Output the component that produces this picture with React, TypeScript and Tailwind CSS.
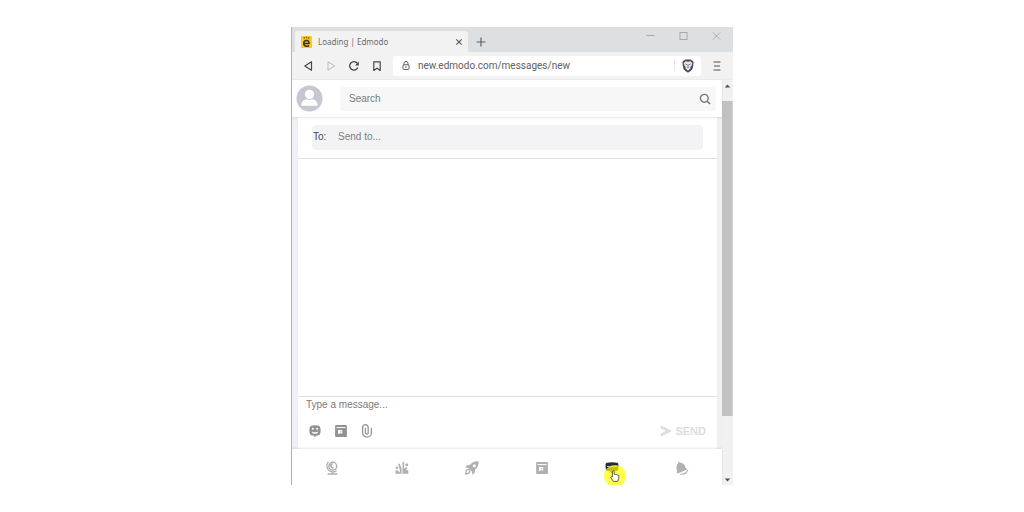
import React from 'react';

interface IconProps {
  className?: string;
}

const EdmodoLogo = ({ className }: IconProps) => (
  <svg viewBox="0 0 11 12" className={className} aria-hidden="true">
    <rect width="11" height="12" rx="0.6" fill="#fdc92f" />
    <path d="M3.2 7.6h4.9c.1-2-.9-3-2.5-3-1.700 0-2.900 1.200-2.900 3 0 1.700 1.200 2.700 3 2.700.9 0 1.700-.2 2.300-.7" fill="none" stroke="#3c3320" strokeWidth="1.5" />
    <circle cx="3.200" cy="1.900" r="0.8" fill="#7d6423" />
    <circle cx="5.500" cy="1.400" r="0.800" fill="#7d6423" />
    <circle cx="7.800" cy="1.900" r="0.800" fill="#7d6423" />
    <path d="M3.400 3.100h4.200" stroke="#b8942b" strokeWidth="0.700" />
  </svg>
);

const BraveIcon = ({ className }: IconProps) => (
  <svg viewBox="0 0 12 14" className={className} aria-hidden="true">
    <path d="M3 .5h6l1 1.200h1l.6 2-.7 4.800c-.3 1.500-1.200 2.500-2.300 3.400L6 13.700l-2.600-1.800C2.300 11 1.400 10 1.100 8.500L.4 3.700l.6-2h1z" fill="#4a4a5a" />
    <path d="M3.500 2.300L6 2.800l2.500-.5 1.800 2-.6 2.300L8.300 8.300l.2 1L6 11.700 3.500 9.300l.2-1-1.400-1.700-.6-2.300z" fill="#e9e9ee" />
    <path d="M3.300 5l1.900.7M8.700 5l-1.900.7M6 5.500v2M4.900 8.500L6 8l1.100.5" stroke="#5a5a6a" strokeWidth="0.800" fill="none" />
  </svg>
);

const SmileyIcon = ({ className }: IconProps) => (
  <svg viewBox="0 0 12 13" className={className} aria-hidden="true">
    <path d="M3 .4Q6-.1 9 .4q2.200.4 2.400 2.600.4 2.500 0 5-.3 2.100-2.400 2.400l-1.500.200L6 12.300l-1.500-1.700L3 10.400Q.900 10.100.600 8 .200 5.500.600 3 .800.800 3 .400z" fill="#929292" />
    <circle cx="3.800" cy="3.800" r="1" fill="#fff" />
    <circle cx="8.200" cy="3.800" r="1" fill="#fff" />
    <path d="M2.800 6.200c1 1.500 5.400 1.500 6.400 0-.1 1.800-1.600 2.600-3.200 2.600S2.900 8 2.800 6.200z" fill="#fff" />
  </svg>
);

const LibraryIcon = ({ className }: IconProps) => (
  <svg viewBox="0 0 12 12" className={className} aria-hidden="true">
    <rect x="0.100" y="0.100" width="11.800" height="11.800" rx="0.900" fill="currentColor" />
    <path d="M1.500 2.600h9" stroke="#fff" strokeWidth="1" />
    <path d="M3 5h4.200v4L5.500 7.900 3 9.200z" fill="#fff" />
    <path d="M5.200 6.300h1v1h-1z" fill="currentColor" />
  </svg>
);

const ClipIcon = ({ className }: IconProps) => (
  <svg viewBox="0 0 12 14" className={className} aria-hidden="true">
    <path d="M4.400 4.500v4.300a1.400 1.400 0 002.800 0V3.500a2.800 2.800 0 00-5.600 0v5.200a4.400 4.400 0 008.800 0V4.500" fill="none" stroke="#939393" strokeWidth="1.300" strokeLinecap="round" />
  </svg>
);

const SendIcon = ({ className }: IconProps) => (
  <svg viewBox="0 0 12 12" className={className} aria-hidden="true">
    <path d="M.700.300L11.900 6 .700 11.700V8.400L5.800 6 .700 3.600z" fill="currentColor" />
  </svg>
);

const GlobeIcon = ({ className }: IconProps) => (
  <svg viewBox="0 0 14 14" className={className} aria-hidden="true">
    <circle cx="7.800" cy="5.200" r="3.900" fill="none" stroke="currentColor" strokeWidth="1.500" />
    <path d="M5.200 3l2.200-1 .5 1.500-1.300 1 .6 1.200 1.600.7-.6 1.400-1.900-.8-1.400-1.700z" fill="currentColor" />
    <path d="M3.500.700A6.200 6.200 0 007.900 11a6 6 0 003.700-1.200M7.500 10.800v2M2.600 13h9.800" fill="none" stroke="currentColor" strokeWidth="1.300" />
  </svg>
);

const ClassesIcon = ({ className }: IconProps) => (
  <svg viewBox="0 0 14 13" className={className} aria-hidden="true">
    <circle cx="2" cy="6.300" r="1.300" fill="currentColor" />
    <circle cx="11.700" cy="3.300" r="1.500" fill="currentColor" />
    <path d="M.400 12.300V10c0-1.600 2.300-1.700 3.200-.2l1.200 1.100V8L3 2.600l1.500-.7 2.100 4.800v5.600zM7.500.600h1.600v6.700l2.200-1.900 1.300 1-1.800 2.100 2.500.2v3.600H7.500z" fill="currentColor" />
  </svg>
);

const RocketIcon = ({ className }: IconProps) => (
  <svg viewBox="0 0 14 14" className={className} aria-hidden="true">
    <path fillRule="evenodd" d="M13.700.300C10 .100 7 1.200 5.100 3.700L2 4.300.300 6.600l3 .300 3.800 3.800.2 3 2.300-1.800.500-3.300C12.600 6.800 13.900 4 13.700.300zM9.300 3.200a1.500 1.500 0 110 3 1.500 1.500 0 010-3z" fill="currentColor" />
    <path d="M.900 13.100l.4-3.500c.5-1.700 3.200-1.500 3.500.200.100 1.700-1.800 3-3.900 3.300z" fill="none" stroke="currentColor" strokeWidth="1.400" />
  </svg>
);

const MessagesIcon = ({ className }: IconProps) => (
  <svg viewBox="0 0 14 12" className={className} aria-hidden="true">
    <path d="M2 .700Q7-.400 12 .700q1.300.3 1.400 1.600.200 3-.3 5.500-.3 1-1.500 1.200l-2.300.2L7 11.500 5 9.200 2.500 9Q1.200 8.800.900 7.800.300 5 .600 2.300.700 1 2 .700z" fill="#25283b" />
    <path d="M2 4.700q1-1 2 0t2 0 2 0 2 0 2 0" stroke="#c5c6d3" strokeWidth="1" fill="none" />
  </svg>
);

const BellIcon = ({ className }: IconProps) => (
  <svg viewBox="0 0 13 14" className={className} aria-hidden="true">
    <path d="M3 .300l1.200 1.100C7.500 1.500 9.700 3.800 10.400 7.300l1.700.900L1.500 12.800 1.600 10.500C.500 7 .900 4 2.600 2.200z" fill="currentColor" />
    <path d="M4.800 13.100c3.400.400 6.500-1.300 7.600-4.100" fill="none" stroke="currentColor" strokeWidth="1.100" />
  </svg>
);

const HandCursor = ({ className }: IconProps) => (
  <svg viewBox="0 0 10 12" className={className} aria-hidden="true">
    <path d="M2.400 7V1.500q.9-1.200 1.800 0v2.800q1.200-.5 1.500.3 1.100-.5 1.500.4 1.400-.3 1.600.9v2.300L7.700 11.400H3.500L.900 8Q.600 6.700 1.600 6.500z" fill="#fff" stroke="#4d4d3a" strokeWidth="0.900" strokeLinejoin="round" />
  </svg>
);

const navItems = [
  { label: 'Stream', icon: GlobeIcon, size: 'size-[14px]', active: false },
  { label: 'Classes', icon: ClassesIcon, size: 'size-[14px]', active: false },
  { label: 'Discover', icon: RocketIcon, size: 'size-[14px]', active: false },
  { label: 'Library', icon: LibraryIcon, size: 'size-3', active: false },
  { label: 'Messages', icon: MessagesIcon, size: 'size-[14px]', active: true },
  { label: 'Notifications', icon: BellIcon, size: 'size-[14px]', active: false },
];

const TitleBar = () => (
  <div className="flex h-[25px] items-end bg-[#dce0e3] pl-[3px]">
    <div className="flex h-[21px] w-[173px] items-center rounded-t-[3px] bg-[#f2f2f2] pl-[6px] pr-1">
      <EdmodoLogo className="h-3 w-[11px]" />
      <span className="ml-[6px] flex-1 whitespace-nowrap font-['Noto_Sans','Open_Sans',sans-serif] text-[8px] text-[#6c6c6c]">Loading | Edmodo</span>
      <button aria-label="Close tab" className="flex size-[10px] items-center justify-center">
        <svg viewBox="0 0 8 8" className="size-2"><path d="M1.300 1.300l5.400 5.400M6.700 1.300L1.300 6.700" stroke="#555" strokeWidth="1.100" /></svg>
      </button>
    </div>
    <button aria-label="New tab" className="ml-2 flex h-[21px] w-[10px] items-center">
      <svg viewBox="0 0 10 10" className="size-[10px]"><path d="M5 .500v9M.500 5h9" stroke="#606366" strokeWidth="1.200" /></svg>
    </button>
    <div className="ml-auto flex h-[25px] items-start gap-6 pr-3 pt-[5px]">
      <button aria-label="Minimize">
        <svg viewBox="0 0 9 9" className="size-[9px]"><path d="M.500 3.500h8" stroke="#a5a8aa" /></svg>
      </button>
      <button aria-label="Maximize">
        <svg viewBox="0 0 9 9" className="size-[9px]"><rect x="1" y="0.500" width="7" height="7" fill="none" stroke="#a5a8aa" /></svg>
      </button>
      <button aria-label="Close window">
        <svg viewBox="0 0 9 9" className="size-[9px]"><path d="M1 .500l7 7M8 .500l-7 7" stroke="#a5a8aa" strokeWidth="0.900" /></svg>
      </button>
    </div>
  </div>
);

const Toolbar = () => (
  <div className="flex h-7 items-center border-b border-[#ececec] bg-[#f2f2f2] pl-[11px] pr-3">
    <div className="flex items-center gap-[13px]">
      <button aria-label="Back">
        <svg viewBox="0 0 10 10" className="size-[10px]"><path d="M8.500.800v8.400L1.800 5z" fill="none" stroke="#454545" strokeWidth="1.200" strokeLinejoin="round" /></svg>
      </button>
      <button aria-label="Forward">
        <svg viewBox="0 0 10 10" className="size-[10px]"><path d="M2 .800v8.400L8.700 5z" fill="none" stroke="#b9b9b9" strokeLinejoin="round" /></svg>
      </button>
      <button aria-label="Reload">
        <svg viewBox="0 0 10 10" className="size-[10px]"><path d="M8.800 6.500A4.200 4.200 0 118.300 2.400" fill="none" stroke="#454545" strokeWidth="1.300" /><path d="M9.800.600v3.800H6z" fill="#454545" /></svg>
      </button>
      <button aria-label="Bookmark">
        <svg viewBox="0 0 10 10" className="size-[10px]"><path d="M1.800.800h6.400v8.600L5 7.200 1.800 9.400z" fill="none" stroke="#454545" strokeWidth="1.200" strokeLinejoin="round" /></svg>
      </button>
    </div>
    <div className="ml-[11px] flex h-5 flex-1 items-center rounded-[3px] bg-white pl-[9px] pr-[7px]">
      <svg viewBox="0 0 8 10" className="h-[10px] w-2" aria-hidden="true"><path d="M2 4V2.500a2 2 0 014 0V4" fill="none" stroke="#5f5f5f" /><rect x="1" y="3.800" width="6" height="4.700" rx="0.800" fill="none" stroke="#5f5f5f" /><path d="M4 5.300v1.700" stroke="#5f5f5f" /></svg>
      <input aria-label="Address" defaultValue="new.edmodo.com/messages/new" className="ml-2 min-w-0 flex-1 bg-transparent font-['Roboto','Noto_Sans',sans-serif] text-[10px] leading-4 text-[#606060] outline-none" />
      <span className="h-[11px] border-l border-[#e8e8e8]" />
      <button aria-label="Shields" className="ml-[7px]">
        <BraveIcon className="h-[14px] w-3" />
      </button>
    </div>
    <button aria-label="Menu" className="ml-3">
      <svg viewBox="0 0 8 10" className="h-[10px] w-2"><path d="M.500 1h7M1 5h6M.500 9h7" stroke="#505050" strokeWidth="1.200" /></svg>
    </button>
  </div>
);

const SearchHeader = () => (
  <header className="relative z-10 flex h-[37px] items-center bg-white pl-1 pr-[6px] shadow-[0_1px_2px_rgba(0,0,0,0.1)]">
    <button aria-label="Profile">
      <svg viewBox="0 0 28 28" className="size-[27px]">
        <circle cx="14" cy="14" r="13.500" fill="#c5c8d3" />
        <circle cx="14" cy="9.700" r="4.800" fill="#fff" />
        <path d="M5.500 21.400c0-4.500 2.900-6.300 5.500-6.700q3 1.700 6 0c2.600.4 5.500 2.200 5.500 6.700z" fill="#fff" />
      </svg>
    </button>
    <div className="ml-[17px] flex h-6 flex-1 items-center rounded-[3px] bg-[#f7f7f7] pl-[9px] pr-[5px]">
      <input aria-label="Search" placeholder="Search" className="min-w-0 flex-1 bg-transparent text-[10px] leading-4 outline-none placeholder:text-[#777a7e]" />
      <button aria-label="Run search">
        <svg viewBox="0 0 12 12" className="size-3"><circle cx="5.300" cy="5.300" r="3.900" fill="none" stroke="#777" strokeWidth="1.400" /><path d="M8.200 8.200l2.800 2.800" stroke="#777" strokeWidth="1.600" /></svg>
      </button>
    </div>
  </header>
);

const MessageComposer = () => (
  <main className="flex flex-1 flex-col bg-[#f0f0f4] pl-[6px] pr-[5px]">
    <div className="flex flex-1 flex-col bg-white">
      <div className="border-b border-[#e0e0e2] px-[14px] pb-2 pt-2">
        <label className="flex h-[25px] items-center rounded-[4px] bg-[#f3f3f5] pb-[2px] pl-[1px] text-[10px] leading-4">
          <span className="w-[25px] text-[#44465e]">To:</span>
          <input placeholder="Send to..." className="min-w-0 flex-1 bg-transparent outline-none placeholder:text-[#7b7d82]" />
        </label>
      </div>
      <div className="flex-1" />
      <div className="border-t border-[#e0e0e2] px-2">
        <textarea aria-label="Message" rows={1} placeholder="Type a message..." className="block h-4 w-full resize-none overflow-hidden text-[10px] leading-4 outline-none placeholder:text-[#7b7b7b]" />
        <div className="flex h-9 items-center">
          <div className="flex items-center gap-[14px] pl-[3px]">
            <button aria-label="Add emoji"><SmileyIcon className="h-[13px] w-3" /></button>
            <button aria-label="Attach from library" className="text-[#929292]"><LibraryIcon className="size-3" /></button>
            <button aria-label="Attach file"><ClipIcon className="h-[14px] w-3" /></button>
          </div>
          <button className="ml-auto mr-[3px] flex items-center gap-[3px] text-[11px] font-bold leading-4 text-[#dcdce2]">
            <SendIcon className="size-3" />
            SEND
          </button>
        </div>
      </div>
    </div>
  </main>
);

const BottomNav = () => (
  <nav className="relative z-10 flex h-9 bg-white px-[5px] shadow-[0_-1px_2px_rgba(0,0,0,0.1)]">
    {navItems.map(({ label, icon: Icon, size, active }) => (
      <a key={label} href="#" aria-label={label} className="relative flex flex-1 items-center justify-center overflow-hidden pt-[2px] text-[#b0b0b0]">
        <Icon className={size} />
        {active && (
          <span className="absolute left-[27px] top-4 flex size-[22px] items-center justify-center">
            <span className="absolute inset-0 rounded-full bg-[#ffff00] opacity-70" />
            <HandCursor className="relative h-3 w-[10px]" />
          </span>
        )}
      </a>
    ))}
  </nav>
);

const ScrollBar = () => (
  <div className="flex w-[11px] flex-col bg-[#f1f1f1]" aria-hidden="true">
    <svg viewBox="0 0 11 12" className="h-3 w-[11px]"><path d="M2.800 7.500h5.400L5.500 4.600z" fill="#505050" /></svg>
    <div className="grow-[9]" />
    <div className="grow-[315] border-r border-[#d4d4d4] bg-[#c1c1c1]" />
    <div className="grow-[57]" />
    <svg viewBox="0 0 11 12" className="h-3 w-[11px]"><path d="M2.800 5.500h5.400L5.500 8.400z" fill="#505050" /></svg>
  </div>
);

export default function App() {
  return (
    <div className="flex min-h-screen justify-center bg-white py-[27px] font-['Liberation_Sans',Arial,sans-serif]">
      <div className="flex w-full max-w-[442px] flex-col border-l border-[#b4b4b8]">
        <TitleBar />
        <Toolbar />
        <div className="flex flex-1">
          <div className="flex min-w-0 flex-1 flex-col">
            <SearchHeader />
            <MessageComposer />
            <BottomNav />
          </div>
          <ScrollBar />
        </div>
      </div>
    </div>
  );
}
